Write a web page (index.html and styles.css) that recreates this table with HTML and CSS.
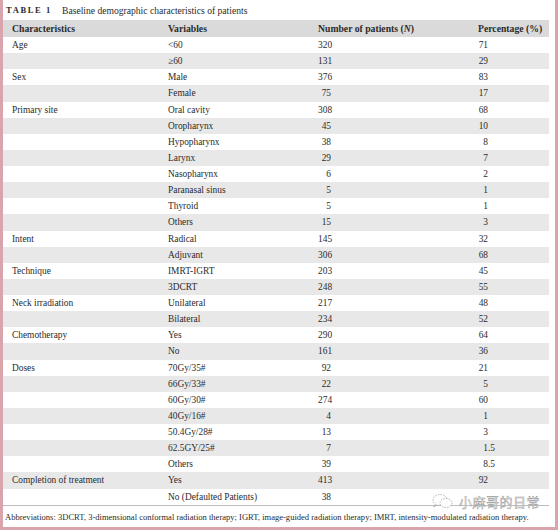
FILE: index.html
```html
<!DOCTYPE html>
<html>
<head>
<meta charset="utf-8">
<link rel="stylesheet" href="styles.css">
</head>
<body>
<div class="frame">
  <div class="caption"><span class="label">TABLE 1</span><span class="ctext">Baseline demographic characteristics of patients</span></div>
  <div class="table">
    <div class="row head"><span>Characteristics</span><span>Variables</span><span>Number of patients (<i>N</i>)</span><span>Percentage (%)</span></div>
    <div class="row"><span>Age</span><span>&lt;60</span><span><b class="n">320</b></span><span><b class="p">71</b></span></div>
    <div class="row"><span></span><span>≥60</span><span><b class="n">131</b></span><span><b class="p">29</b></span></div>
    <div class="row"><span>Sex</span><span>Male</span><span><b class="n">376</b></span><span><b class="p">83</b></span></div>
    <div class="row"><span></span><span>Female</span><span><b class="n">75</b></span><span><b class="p">17</b></span></div>
    <div class="row"><span>Primary site</span><span>Oral cavity</span><span><b class="n">308</b></span><span><b class="p">68</b></span></div>
    <div class="row"><span></span><span>Oropharynx</span><span><b class="n">45</b></span><span><b class="p">10</b></span></div>
    <div class="row"><span></span><span>Hypopharynx</span><span><b class="n">38</b></span><span><b class="p">8</b></span></div>
    <div class="row"><span></span><span>Larynx</span><span><b class="n">29</b></span><span><b class="p">7</b></span></div>
    <div class="row"><span></span><span>Nasopharynx</span><span><b class="n">6</b></span><span><b class="p">2</b></span></div>
    <div class="row"><span></span><span>Paranasal sinus</span><span><b class="n">5</b></span><span><b class="p">1</b></span></div>
    <div class="row"><span></span><span>Thyroid</span><span><b class="n">5</b></span><span><b class="p">1</b></span></div>
    <div class="row"><span></span><span>Others</span><span><b class="n">15</b></span><span><b class="p">3</b></span></div>
    <div class="row"><span>Intent</span><span>Radical</span><span><b class="n">145</b></span><span><b class="p">32</b></span></div>
    <div class="row"><span></span><span>Adjuvant</span><span><b class="n">306</b></span><span><b class="p">68</b></span></div>
    <div class="row"><span>Technique</span><span>IMRT-IGRT</span><span><b class="n">203</b></span><span><b class="p">45</b></span></div>
    <div class="row"><span></span><span>3DCRT</span><span><b class="n">248</b></span><span><b class="p">55</b></span></div>
    <div class="row"><span>Neck irradiation</span><span>Unilateral</span><span><b class="n">217</b></span><span><b class="p">48</b></span></div>
    <div class="row"><span></span><span>Bilateral</span><span><b class="n">234</b></span><span><b class="p">52</b></span></div>
    <div class="row"><span>Chemotherapy</span><span>Yes</span><span><b class="n">290</b></span><span><b class="p">64</b></span></div>
    <div class="row"><span></span><span>No</span><span><b class="n">161</b></span><span><b class="p">36</b></span></div>
    <div class="row"><span>Doses</span><span>70Gy/35#</span><span><b class="n">92</b></span><span><b class="p">21</b></span></div>
    <div class="row"><span></span><span>66Gy/33#</span><span><b class="n">22</b></span><span><b class="p">5</b></span></div>
    <div class="row"><span></span><span>60Gy/30#</span><span><b class="n">274</b></span><span><b class="p">60</b></span></div>
    <div class="row"><span></span><span>40Gy/16#</span><span><b class="n">4</b></span><span><b class="p">1</b></span></div>
    <div class="row"><span></span><span>50.4Gy/28#</span><span><b class="n">13</b></span><span><b class="p">3</b></span></div>
    <div class="row"><span></span><span>62.5GY/25#</span><span><b class="n">7</b></span><span><b class="p">1</b>.5</span></div>
    <div class="row"><span></span><span>Others</span><span><b class="n">39</b></span><span><b class="p">8</b>.5</span></div>
    <div class="row"><span>Completion of treatment</span><span>Yes</span><span><b class="n">413</b></span><span><b class="p">92</b></span></div>
    <div class="row"><span></span><span>No (Defaulted Patients)</span><span><b class="n">38</b></span><span></span></div>
  </div>
  <div class="foot">Abbreviations: 3DCRT, 3-dimensional conformal radiation therapy; IGRT, image-guided radiation therapy; IMRT, intensity-modulated radiation therapy.</div>
  <div class="mark">
    <svg class="wx" width="26" height="16" viewBox="0 0 26 16">
      <ellipse cx="10" cy="7" rx="7" ry="5.5" fill="none" stroke="#b0b0b0" stroke-width="1" stroke-dasharray="1.5 1.2"/>
      <ellipse cx="16" cy="10" rx="6" ry="4.5" fill="#fff" stroke="#b0b0b0" stroke-width="1" stroke-dasharray="1.5 1.2"/>
      <path d="M5 11.5 L3.5 14 L7 12.3" fill="none" stroke="#b0b0b0" stroke-width="0.8"/>
    </svg>
    <span class="wtext">小麻哥的日常</span>
  </div>
</div>
</body>
</html>
```
FILE: styles.css
```css
html, body {
  margin: 0;
  padding: 0;
  background: #fff;
}
.frame {
  position: relative;
  width: 558px;
  height: 530px;
  box-sizing: border-box;
  border-left: 3px solid #d9a4ac;
  border-right: 3px solid #d9a4ac;
  border-bottom: 3px solid #d9a4ac;
  padding-right: 6px;
  font-family: "Liberation Serif", "Times New Roman", serif;
  color: #2b2b2b;
}
.caption {
  height: 20px;
  display: flex;
  align-items: center;
  padding-left: 3px;
  font-size: 9.5px;
}
.label {
  font-weight: bold;
  letter-spacing: 1.6px;
  font-size: 8.5px;
  width: 56px;
}
.ctext {
  font-size: 9.6px;
}
.table {
  border-bottom: 1px solid #bdbdbd;
}
.row {
  display: grid;
  grid-template-columns: 156px 150px 160px 1fr;
  padding-left: 9px;
  height: 16.14px;
  align-items: center;
  font-size: 9.4px;
}
.row:nth-child(odd) {
  background: #e8e8e8;
}
.row.head {
  height: 17px;
  background: #dadada;
  font-weight: bold;
  font-size: 9.7px;
}
.row.head:nth-child(odd) {
  background: #dadada;
}
.n {
  font-weight: normal;
  display: inline-block;
  width: 13px;
  text-align: right;
}
.p {
  font-weight: normal;
  display: inline-block;
  width: 10px;
  text-align: right;
}
.foot {
  font-size: 8.55px;
  padding-left: 2px;
  margin-top: 6px;
  white-space: nowrap;
}
.mark {
  position: absolute;
  right: 15px;
  bottom: 18px;
  display: flex;
  align-items: center;
  gap: 3px;
}
.wtext {
  font-family: "Noto Sans CJK SC", sans-serif;
  font-size: 13px;
  line-height: 13px;
  color: #fff;
  -webkit-text-stroke: 0.5px #9a9a9a;
  letter-spacing: 0.5px;
}
```
